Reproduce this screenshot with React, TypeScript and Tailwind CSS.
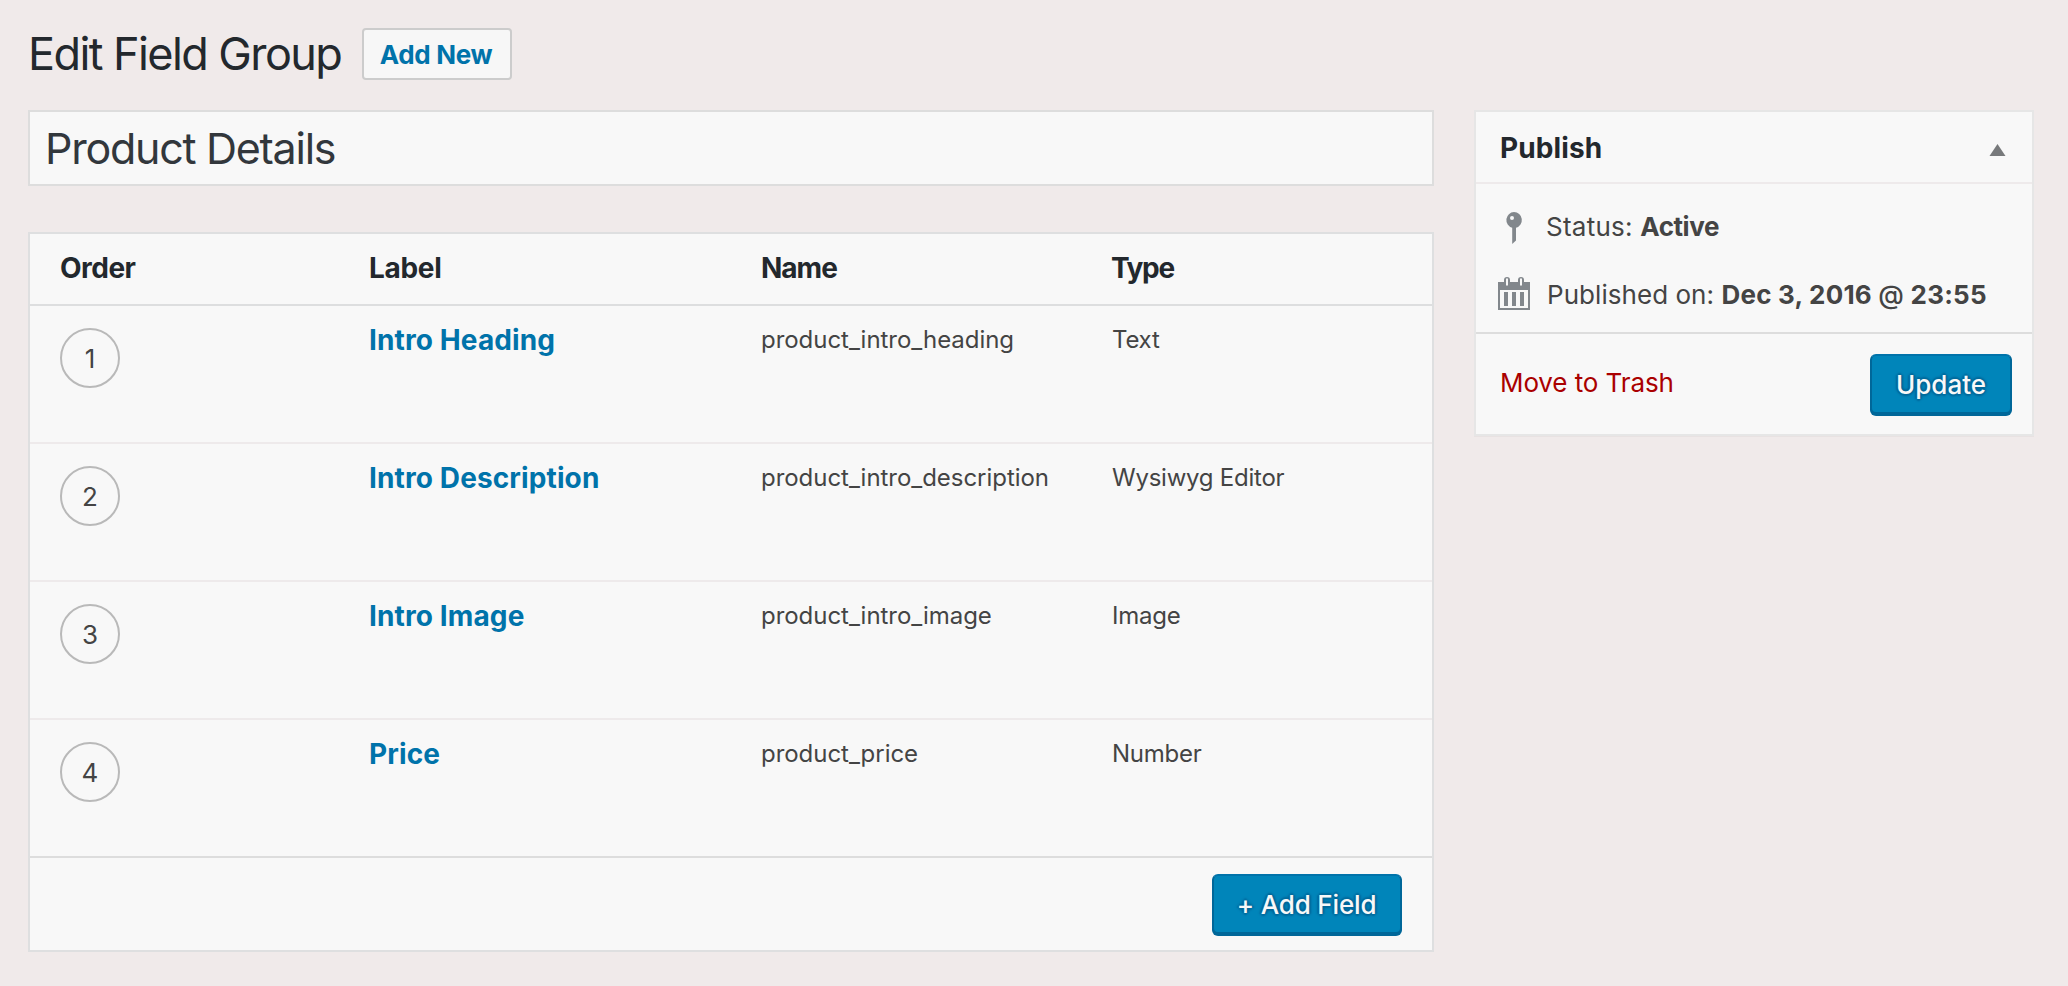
const fields = [
  { order: 1, label: "Intro Heading", name: "product_intro_heading", type: "Text" },
  { order: 2, label: "Intro Description", name: "product_intro_description", type: "Wysiwyg Editor" },
  { order: 3, label: "Intro Image", name: "product_intro_image", type: "Image" },
  { order: 4, label: "Price", name: "product_price", type: "Number" },
];

const columns = "grid grid-cols-[309px_392px_350px_1fr] pl-[30px]";

const primaryButton =
  "flex h-[60px] items-center justify-center rounded-[6px] border-2 border-[#0073aa] border-x-[#006799] border-b-[#006799] bg-[#0085ba] text-[26px] font-medium text-[#f8f8f8] shadow-[0_2px_0_#006799] [text-shadow:0_-2px_2px_#006799,2px_0_2px_#006799,0_2px_2px_#006799,-2px_0_2px_#006799]";

function PinIcon() {
  return (
    <svg width="32" height="32" viewBox="0 0 32 32" fill="#82878c">
      <path
        fillRule="evenodd"
        d="M16 0a8 8 0 0 1 2 15.7V28.5L14.2 32V15.7A8 8 0 0 1 16 0ZM14 4a2 2 0 1 0 0 4a2 2 0 1 0 0-4Z"
      />
    </svg>
  );
}

function CalendarIcon() {
  return (
    <svg width="32" height="33" viewBox="0 0 32 33">
      <path
        fill="#82878c"
        fillRule="evenodd"
        d="M0 5h6V3a3 3 0 0 1 6 0v2h8V3a3 3 0 0 1 6 0v2h6v28H0ZM2 13v18h28V13Z"
      />
      <path fill="#82878c" d="M6 15h4v14H6zM14 15h4v14h-4zM22 15h4v14h-4z" />
      <path d="M9 2.2v5.6M23 2.2v5.6" stroke="#f8f8f8" strokeWidth="2" strokeLinecap="round" />
    </svg>
  );
}

function FieldTable() {
  return (
    <section className="mt-[46px] border-2 border-[#dedfe0] bg-[#f8f8f8]">
      <div className={`${columns} h-[72px] items-center border-b-2 border-[#dddedf] pb-[2px] text-[28px] font-bold text-[#23282d]`}>
        <div className="tracking-[-0.5px]">Order</div>
        <div className="tracking-[-0.3px]">Label</div>
        <div className="tracking-[-1px]">Name</div>
        <div className="tracking-[-1.35px]">Type</div>
      </div>
      {fields.map((f) => (
        <div key={f.order} className={`${columns} h-[138px] border-b-2 border-[#eeeaeb] leading-[36px] last-of-type:border-[#dddddd]`}>
          <div className="mt-[22px] flex size-[60px] items-center justify-center rounded-full border-2 border-[#b9b9b9] pt-[2px] text-[26px]">
            {f.order}
          </div>
          <a className="pt-[16px] text-[28px] font-[650] tracking-[0.12px] text-[#0073aa]">{f.label}</a>
          <div className="pt-[16px] text-[24px] tracking-[-0.04px]">{f.name}</div>
          <div className="pt-[16px] pl-px text-[24px] tracking-[-0.24px]">{f.type}</div>
        </div>
      ))}
      <footer className="flex h-[92px] justify-end pt-[16px] pr-[30px]">
        <button className={`${primaryButton} w-[190px] pr-px tracking-[-0.15px]`}>+ Add Field</button>
      </footer>
    </section>
  );
}

function PublishBox() {
  return (
    <aside className="w-[560px] border-2 border-[#e6e6e6] bg-[#f8f8f8] shadow-[0_1px_0_rgba(0,0,0,0.03)]">
      <div className="flex h-[72px] items-center justify-between border-b-2 border-[#eeeaeb] pr-[26.5px] pl-[24px]">
        <h2 className="pt-px text-[28px] font-[650] tracking-[0.1px] text-[#23282d]">Publish</h2>
        <svg className="mt-[6px]" width="17" height="12" viewBox="0 0 17 12" fill="#77797b">
          <path d="M8.5 0L16.5 12H0.5Z" />
        </svg>
      </div>
      <div className="flex h-[150px] flex-col gap-[28px] border-b-2 border-[#dddddd] pt-[23px] pl-[22px] text-[26px] leading-[40px]">
        <div className="flex h-[40px] items-start gap-[16px]">
          <div className="pt-[5px]"><PinIcon /></div>
          <div>
            <span className="tracking-[0.25px]">Status: </span>
            <b className="font-[650] tracking-[-0.45px]">Active</b>
          </div>
        </div>
        <div className="flex h-[40px] items-start gap-[17px]">
          <div className="pt-[2px]"><CalendarIcon /></div>
          <div>
            <span className="tracking-[0.05px]">Published on: </span>
            <b className="font-[650] tracking-[0.23px]">
              Dec 3, 2016 <span className="font-medium [font-feature-settings:'calt'_0]">@</span> 23:55
            </b>
          </div>
        </div>
      </div>
      <div className="flex h-[100px] items-start justify-between pt-[20px] pr-[20px] pl-[24px]">
        <a className="text-[26px] leading-[57px] tracking-[-0.1px] text-[#aa0000]">Move to Trash</a>
        <button className={`${primaryButton} w-[142px]`}>Update</button>
      </div>
    </aside>
  );
}

export default function App() {
  return (
    <div className="h-[986px] overflow-hidden bg-[#f0eaea] px-[28px] pt-[28px] font-['Inter','Liberation_Sans',sans-serif] text-[#444444]">
      <header className="flex h-[52px] items-center">
        <h1 className="w-[334px] text-[45px] leading-[52px] tracking-[-1.58px] whitespace-nowrap text-[#23282d]">Edit Field Group</h1>
        <button className="h-[52px] w-[150px] rounded-[4px] border-2 border-[#cccccc] bg-[#f7f7f7] pr-[2px] text-[26px] font-[650] tracking-[-0.3px] text-[#0073aa]">
          Add New
        </button>
      </header>
      <div className="mt-[30px] flex items-start gap-[40px]">
        <main className="w-[1406px]">
          <div className="flex h-[76px] items-center border-2 border-[#dddddd] bg-[#f8f8f8] pl-[15px] text-[43px] tracking-[-1.27px] text-[#32373c]">
            Product Details
          </div>
          <FieldTable />
        </main>
        <PublishBox />
      </div>
    </div>
  );
}
